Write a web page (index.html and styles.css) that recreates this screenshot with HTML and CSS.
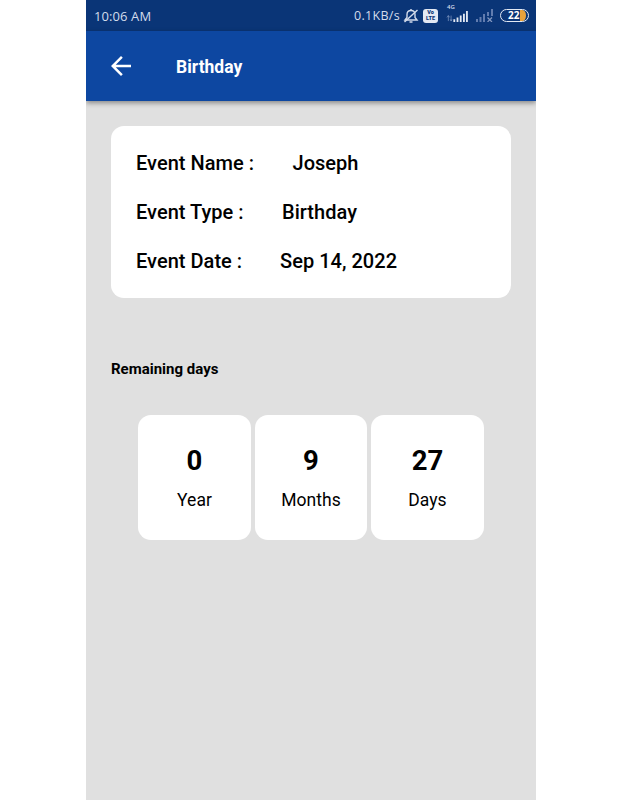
FILE: index.html
```html
<!DOCTYPE html>
<html lang="en">
<head>
  <meta charset="UTF-8">
  <meta name="viewport" content="width=device-width, initial-scale=1.0">
  <title>Birthday</title>
  <link rel="stylesheet" href="styles.css">
</head>
<body>
  <div class="phone">
    <div class="status-bar">
      <span class="time">10:06 AM</span>
      <span class="speed">0.1KB/s</span>
      <!-- muted bell -->
      <svg class="bell" width="16" height="16" viewBox="0 0 16 16" fill="none" stroke="#d3dceb" stroke-width="1.4">
        <path d="M2 12L4 9.500V6.500C4 4 5.500 2.500 8 2.500C10.500 2.500 12 4 12 6.500V9.500L14 12Z"/>
        <path d="M6.500 14H9.500M8 1V2.500M1.500 14L14.500 2"/>
      </svg>
      <span class="volte"><span>Vo</span><span>LTE</span></span>
      <div class="network">
        <span class="network-type">4G</span>
        <svg width="23" height="12" viewBox="0 0 23 12">
          <path d="M1.500 5V11M0 7L1.500 5L3 7M4.500 5V11M3.500 9L4.500 11L5.500 9" fill="none" stroke="#8fa3c9" stroke-width=".7"/>
          <path d="M7 9H9V12H7ZM10.500 7H12.500V12H10.500ZM14 5H16V12H14ZM17.500 3H19.500V12H17.500ZM20.800 0H22.800V12H20.800Z" fill="#e3e9f3"/>
        </svg>
      </div>
      <svg class="no-signal" width="18" height="13" viewBox="0 0 18 13" fill="#617caf">
        <path d="M0 10H2V13H0ZM3.500 8H5.500V13H3.500ZM7 5H9V13H7ZM11 3H13V7H11ZM15 0H17V7H15Z"/>
        <path d="M11.500 8.500L16 13M16 8.500L11.500 13" fill="none" stroke="#8297bf" stroke-width="1.200"/>
      </svg>
      <span class="battery">22</span>
    </div>

    <header class="app-bar">
      <svg class="back" width="30" height="30" viewBox="0 0 24 24" fill="#fff">
        <path d="M20 11H7.830l5.590-5.590L12 4l-8 8 8 8 1.410-1.410L7.830 13H20v-2z"/>
      </svg>
      <h1>Birthday</h1>
    </header>

    <main>
      <div class="event-card">
        <div class="event-row"><span class="label name">Event Name :</span><span>Joseph</span></div>
        <div class="event-row"><span class="label type">Event Type :</span><span>Birthday</span></div>
        <div class="event-row"><span class="label date">Event Date :</span><span>Sep 14, 2022</span></div>
      </div>

      <h2>Remaining days</h2>

      <div class="counters">
        <div class="counter"><strong>0</strong><span>Year</span></div>
        <div class="counter"><strong>9</strong><span>Months</span></div>
        <div class="counter"><strong>27</strong><span>Days</span></div>
      </div>
    </main>
  </div>
</body>
</html>
```

FILE: styles.css
```css
* {
  box-sizing: border-box;
}
body {
  margin: 0;
  background: #fff;
  color: #000;
  font-family: Roboto, sans-serif;
}
.phone {
  width: 450px;
  height: 800px;
  margin: 0 auto;
  background: #e0e0e0;
  overflow: hidden;
}
.status-bar {
  display: flex;
  align-items: center;
  height: 31px;
  padding: 0 7px 0 8px;
  background: #0a3577;
  color: #d3dceb;
  font-family: "Open Sans", sans-serif;
  font-size: 13px;
}
.time {
  letter-spacing: 0.1px;
}
.speed {
  margin-left: auto;
  font-size: 12.5px;
  letter-spacing: 0.3px;
}
.bell {
  margin-left: 3px;
}
.volte {
  display: flex;
  flex-direction: column;
  align-items: center;
  justify-content: center;
  gap: 1px;
  width: 15px;
  height: 14px;
  margin-left: 4px;
  border-radius: 3px;
  background: #e3e9f3;
  color: #0a3577;
  font-family: Roboto, sans-serif;
  font-size: 5.5px;
  font-weight: 900;
  line-height: 5px;
}
.volte span {
  height: 5px;
}
.network {
  display: flex;
  flex-direction: column;
  width: 23px;
  height: 18px;
  margin: -5px 0 0 8px;
}
.network-type {
  height: 6px;
  padding-left: 1px;
  font-size: 6px;
  font-weight: 600;
  line-height: 6px;
}
.network svg {
  margin-top: 1px;
}
.no-signal {
  margin-left: 7px;
}
.battery {
  width: 29px;
  height: 13px;
  margin-left: 6px;
  padding: 0 2px 0 0;
  border: 1.5px solid #e3e9f3;
  border-radius: 7px;
  background: linear-gradient(90deg, transparent 76%, #e9a23b 76%) content-box;
  color: #fff;
  font-size: 10px;
  font-weight: 700;
  line-height: 11px;
  text-indent: 7px;
}
.app-bar {
  display: flex;
  align-items: center;
  height: 70px;
  padding-left: 20px;
  background: #0d47a1;
  color: #fff;
  box-shadow: 0 2px 5px rgba(0, 0, 0, 0.4);
}
.app-bar h1 {
  margin: 1px 0 0 40px;
  font-size: 17.5px;
  font-weight: 700;
}
main {
  padding: 25px 25px 0;
}
.event-card {
  display: flex;
  flex-direction: column;
  gap: 25px;
  height: 171.5px;
  padding: 25px;
  border-radius: 13px;
  background: #fff;
}
.event-row {
  display: flex;
  height: 24px;
  font-size: 20px;
  font-weight: 500;
  line-height: 24px;
  letter-spacing: 0.03px;
  white-space: pre;
}
.label.name {
  width: 156.5px;
}
.label.type {
  width: 146px;
}
.label.date {
  width: 144px;
}
h2 {
  margin: 62px 0 0;
  font-size: 15px;
  font-weight: 700;
  line-height: 18px;
}
.counters {
  display: flex;
  justify-content: center;
  gap: 4px;
  margin-top: 37.5px;
}
.counter {
  display: flex;
  flex-direction: column;
  align-items: center;
  width: 112.5px;
  height: 125px;
  padding-top: 30px;
  border-radius: 13px;
  background: #fff;
}
.counter strong {
  font-size: 27.5px;
  line-height: 32px;
}
.counter span {
  margin-top: 12px;
  font-size: 17.5px;
  line-height: 22px;
  letter-spacing: 0.05px;
}
```
